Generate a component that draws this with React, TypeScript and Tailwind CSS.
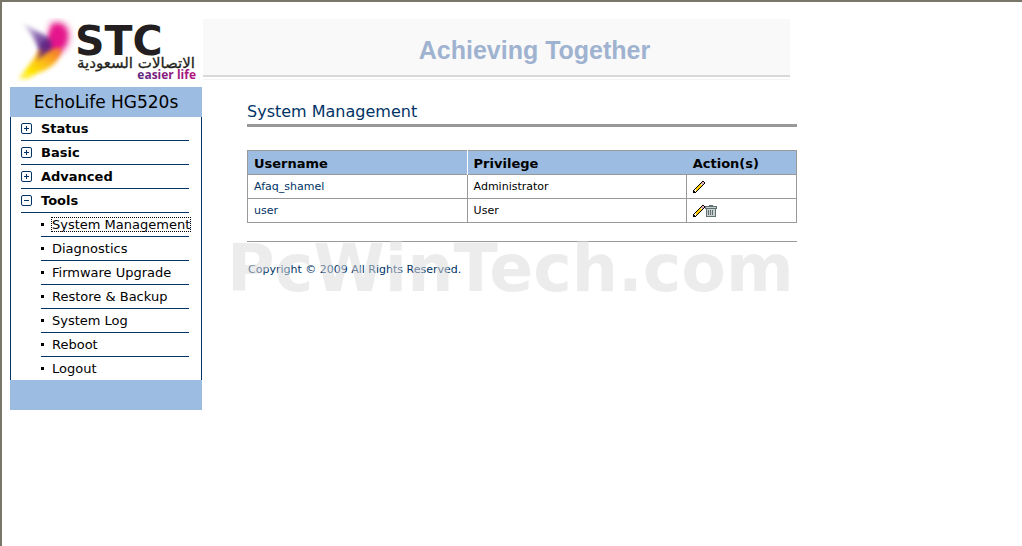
const groups = [
  { label: 'Status', open: false },
  { label: 'Basic', open: false },
  { label: 'Advanced', open: false },
  { label: 'Tools', open: true },
]

const tools = [
  'System Management',
  'Diagnostics',
  'Firmware Upgrade',
  'Restore & Backup',
  'System Log',
  'Reboot',
  'Logout',
]

const users = [
  { name: 'Afaq_shamel', privilege: 'Administrator', removable: false },
  { name: 'user', privilege: 'User', removable: true },
]

function Logo() {
  return (
    <svg viewBox="0 0 190 68" className="block w-[190px] h-[68px]" role="img" aria-label="STC easier life">
      <defs>
        <linearGradient id="wingLeft" x1="0" y1="0" x2="1" y2="1">
          <stop offset="0" stopColor="#b5a3d6" stopOpacity="0.4" />
          <stop offset="0.5" stopColor="#8560ab" />
          <stop offset="1" stopColor="#5d2583" />
        </linearGradient>
        <linearGradient id="tail" x1="1" y1="0" x2="0" y2="1">
          <stop offset="0" stopColor="#f26a2c" />
          <stop offset="0.4" stopColor="#fbb51b" />
          <stop offset="0.75" stopColor="#ffe800" />
          <stop offset="1" stopColor="#fff27a" />
        </linearGradient>
        <linearGradient id="slogan" x1="0" y1="0" x2="1" y2="0">
          <stop offset="0" stopColor="#5d2583" />
          <stop offset="1" stopColor="#b3127c" />
        </linearGradient>
        <filter id="soft" x="-30%" y="-30%" width="160%" height="160%">
          <feGaussianBlur stdDeviation="2" />
        </filter>
        <filter id="softer" x="-40%" y="-40%" width="180%" height="180%">
          <feGaussianBlur stdDeviation="3" />
        </filter>
      </defs>
      <path d="M41 4 C51 0 62 7 60 20 C59 31 51 38 40 38 C34 32 37 14 41 4Z" fill="#f06fb4" filter="url(#softer)" />
      <path d="M12 5 L40 20 L42 36 L30 37 C28 26 21 14 12 5Z" fill="url(#wingLeft)" filter="url(#soft)" />
      <path d="M43 8 C53 4 58 13 56 22 C54 31 45 36 38 34 C37 26 39 15 43 8Z" fill="#e5148c" filter="url(#soft)" />
      <path d="M29 32 L51 30 C52 38 46 46 37 51 C29 55 22 57 18 61 L8 61 C15 52 23 43 29 32Z" fill="url(#tail)" filter="url(#soft)" />
      <path d="M31 24 L41 21 L42 31 L27 42 C30 35 32 30 31 24Z" fill="#5f2482" opacity="0.85" filter="url(#soft)" />
      <text x="65" y="37" fontFamily="DejaVu Sans, sans-serif" fontWeight="700" fontSize="41" fill="#231f20">STC</text>
      <text x="126" y="50" textAnchor="middle" fontFamily="DejaVu Sans, sans-serif" fontSize="15" fill="#231f20" stroke="#231f20" strokeWidth="0.3">الاتصالات السعودية</text>
      <text x="186" y="61" textAnchor="end" fontFamily="Open Sans, sans-serif" fontWeight="700" fontSize="12" fill="url(#slogan)">easier life</text>
    </svg>
  )
}

function ToggleIcon({ open }: { open: boolean }) {
  return (
    <svg viewBox="0 0 11 11" className="block w-[11px] h-[11px] shrink-0" fill="none" stroke="#003366">
      <rect x="0.5" y="0.5" width="10" height="10" rx="1.5" />
      <path d={open ? 'M3 5.5h5' : 'M3 5.5h5M5.5 3v5'} />
    </svg>
  )
}

function PencilIcon() {
  return (
    <svg viewBox="0 0 12 12" className="block w-3 h-3" shapeRendering="crispEdges">
      <path
        fill="#000"
        d="M9 0h2v1h-2zM8 1h1v1h-1zM11 1h1v2h-1zM7 2h1v1h-1zM6 3h1v1h-1zM10 3h1v1h-1zM5 4h1v1h-1zM9 4h1v1h-1zM4 5h1v1h-1zM8 5h1v1h-1zM3 6h1v1h-1zM7 6h1v1h-1zM2 7h1v1h-1zM6 7h1v1h-1zM1 8h1v1h-1zM5 8h1v1h-1zM0 9h1v3h-1zM4 9h1v1h-1zM1 10h1v2h-1zM3 10h1v1h-1zM2 11h1v1h-1z"
      />
      <path fill="#f4b6bd" d="M9 1h2v2h-1v-1h-1z" />
      <path fill="#c9a0a4" d="M8 2h2v2h-1v-1h-1z" />
      <path fill="#ffcc00" d="M7 3h1v1h1v1h-1v1h-1v1h-1v1h-1v1h-1v1h-1v-1h-1v-1h1v-1h1v-1h1v-1h1v-1h1z" />
      <path fill="#fff3c4" d="M1 9h2v1h-2zM2 10h1v1h-1zM2 8h1v1h-1z" />
    </svg>
  )
}

function TrashIcon() {
  return (
    <svg viewBox="0 0 12 12" className="block w-3 h-3" shapeRendering="crispEdges">
      <path fill="#5f7070" d="M4 0h4v1h4v3h-1v8h-10v-8h-1v-3h4z" />
      <path fill="#c9cfcf" d="M1 2h10v1h-10zM2 4h8v7h-8z" />
      <path fill="#5f7070" d="M3 5h1v5h-1zM5 5h1v5h-1zM7 5h1v5h-1z" />
    </svg>
  )
}

function Sidebar() {
  return (
    <nav className="w-48 shrink-0 bg-[#9cbce1] text-black">
      <div className="flex h-[30px] items-center justify-center pt-px text-[17px]">EchoLife HG520s</div>
      <div className="border-x border-[#003366] bg-white pl-[10px] pr-3">
        {groups.map((g) => (
          <button
            key={g.label}
            type="button"
            aria-expanded={g.open}
            className="flex h-6 w-full items-center gap-[9px] border-b border-[#003366] text-left text-[13px] font-bold"
          >
            <ToggleIcon open={g.open} />
            {g.label}
          </button>
        ))}
        <ul className="pl-5 text-[13px]">
          {tools.map((t, i) => (
            <li key={t} className="flex h-6 items-center gap-2 whitespace-nowrap border-b border-[#003366] last:h-[23px] last:border-b-0">
              <span className="h-[3px] w-[3px] shrink-0 bg-black" />
              <a
                href="#"
                className={i === 0 ? 'leading-[13px] outline-1 outline-dotted outline-black' : 'leading-[13px]'}
              >
                {t}
              </a>
            </li>
          ))}
        </ul>
      </div>
      <div className="h-[30px]" />
    </nav>
  )
}

export default function App() {
  return (
    <div className="min-h-screen border-l-2 border-t-2 border-[#79766a] bg-white pl-2 pt-4 font-['DejaVu_Sans',sans-serif]">
      <header className="flex h-[69px]">
        <div className="w-[193px] shrink-0">
          <Logo />
        </div>
        <div className="mt-px h-[61px] w-full max-w-[587px] border-b border-[#f4f4f4]">
          <div className="flex h-[58px] items-center justify-center border-b-2 border-[#d9d9d9] bg-[#f9f9f9] pl-[76px] pt-2 font-['Liberation_Sans',sans-serif] text-[25px] font-bold text-[#9fb3d0]">
            Achieving Together
          </div>
        </div>
      </header>

      <div className="flex items-start gap-[45px]">
        <Sidebar />
        <main className="w-full max-w-[550px] pt-[17px]">
          <h1 className="border-b-3 border-[#999999] pb-1 text-[16px] leading-4 font-normal text-[#003366]">
            System Management
          </h1>
          <table className="mt-[23px] w-full table-fixed border-collapse border border-[#999999] text-left text-[11px] text-black">
            <colgroup>
              <col className="w-2/5" />
              <col className="w-2/5" />
              <col className="w-1/5" />
            </colgroup>
            <thead className="bg-[#9cbce1] text-[13px]">
              <tr className="h-6">
                <th className="border-r border-r-white px-[6px] pt-[2px] pb-0 font-bold">Username</th>
                <th className="px-[6px] pt-[2px] pb-0 font-bold">Privilege</th>
                <th className="px-[6px] pt-[2px] pb-0 font-bold">Action(s)</th>
              </tr>
            </thead>
            <tbody>
              {users.map((u) => (
                <tr key={u.name} className="h-6">
                  <td className="border border-[#999999] px-[6px] pt-[2px] pb-0">
                    <a href="#" className="text-[#003366]">{u.name}</a>
                  </td>
                  <td className="border border-[#999999] px-[6px] pt-[2px] pb-0">{u.privilege}</td>
                  <td className="border border-[#999999] px-[6px] py-0">
                    <div className="flex">
                      <button type="button" aria-label="Edit">
                        <PencilIcon />
                      </button>
                      {u.removable && (
                        <button type="button" aria-label="Delete">
                          <TrashIcon />
                        </button>
                      )}
                    </div>
                  </td>
                </tr>
              ))}
            </tbody>
          </table>

          <footer className="relative mt-[18px] border-t border-[#999999] pt-5 text-[11px] leading-4 text-[#003366]">
            <p className="pl-px">Copyright © 2009 All Rights Reserved.</p>
            <div className="pointer-events-none absolute -left-5 -top-2 whitespace-nowrap text-[65px] leading-[70px] font-bold text-[#dbdbdb] opacity-50">
              PcWinTech.com
            </div>
          </footer>
        </main>
      </div>
    </div>
  )
}
